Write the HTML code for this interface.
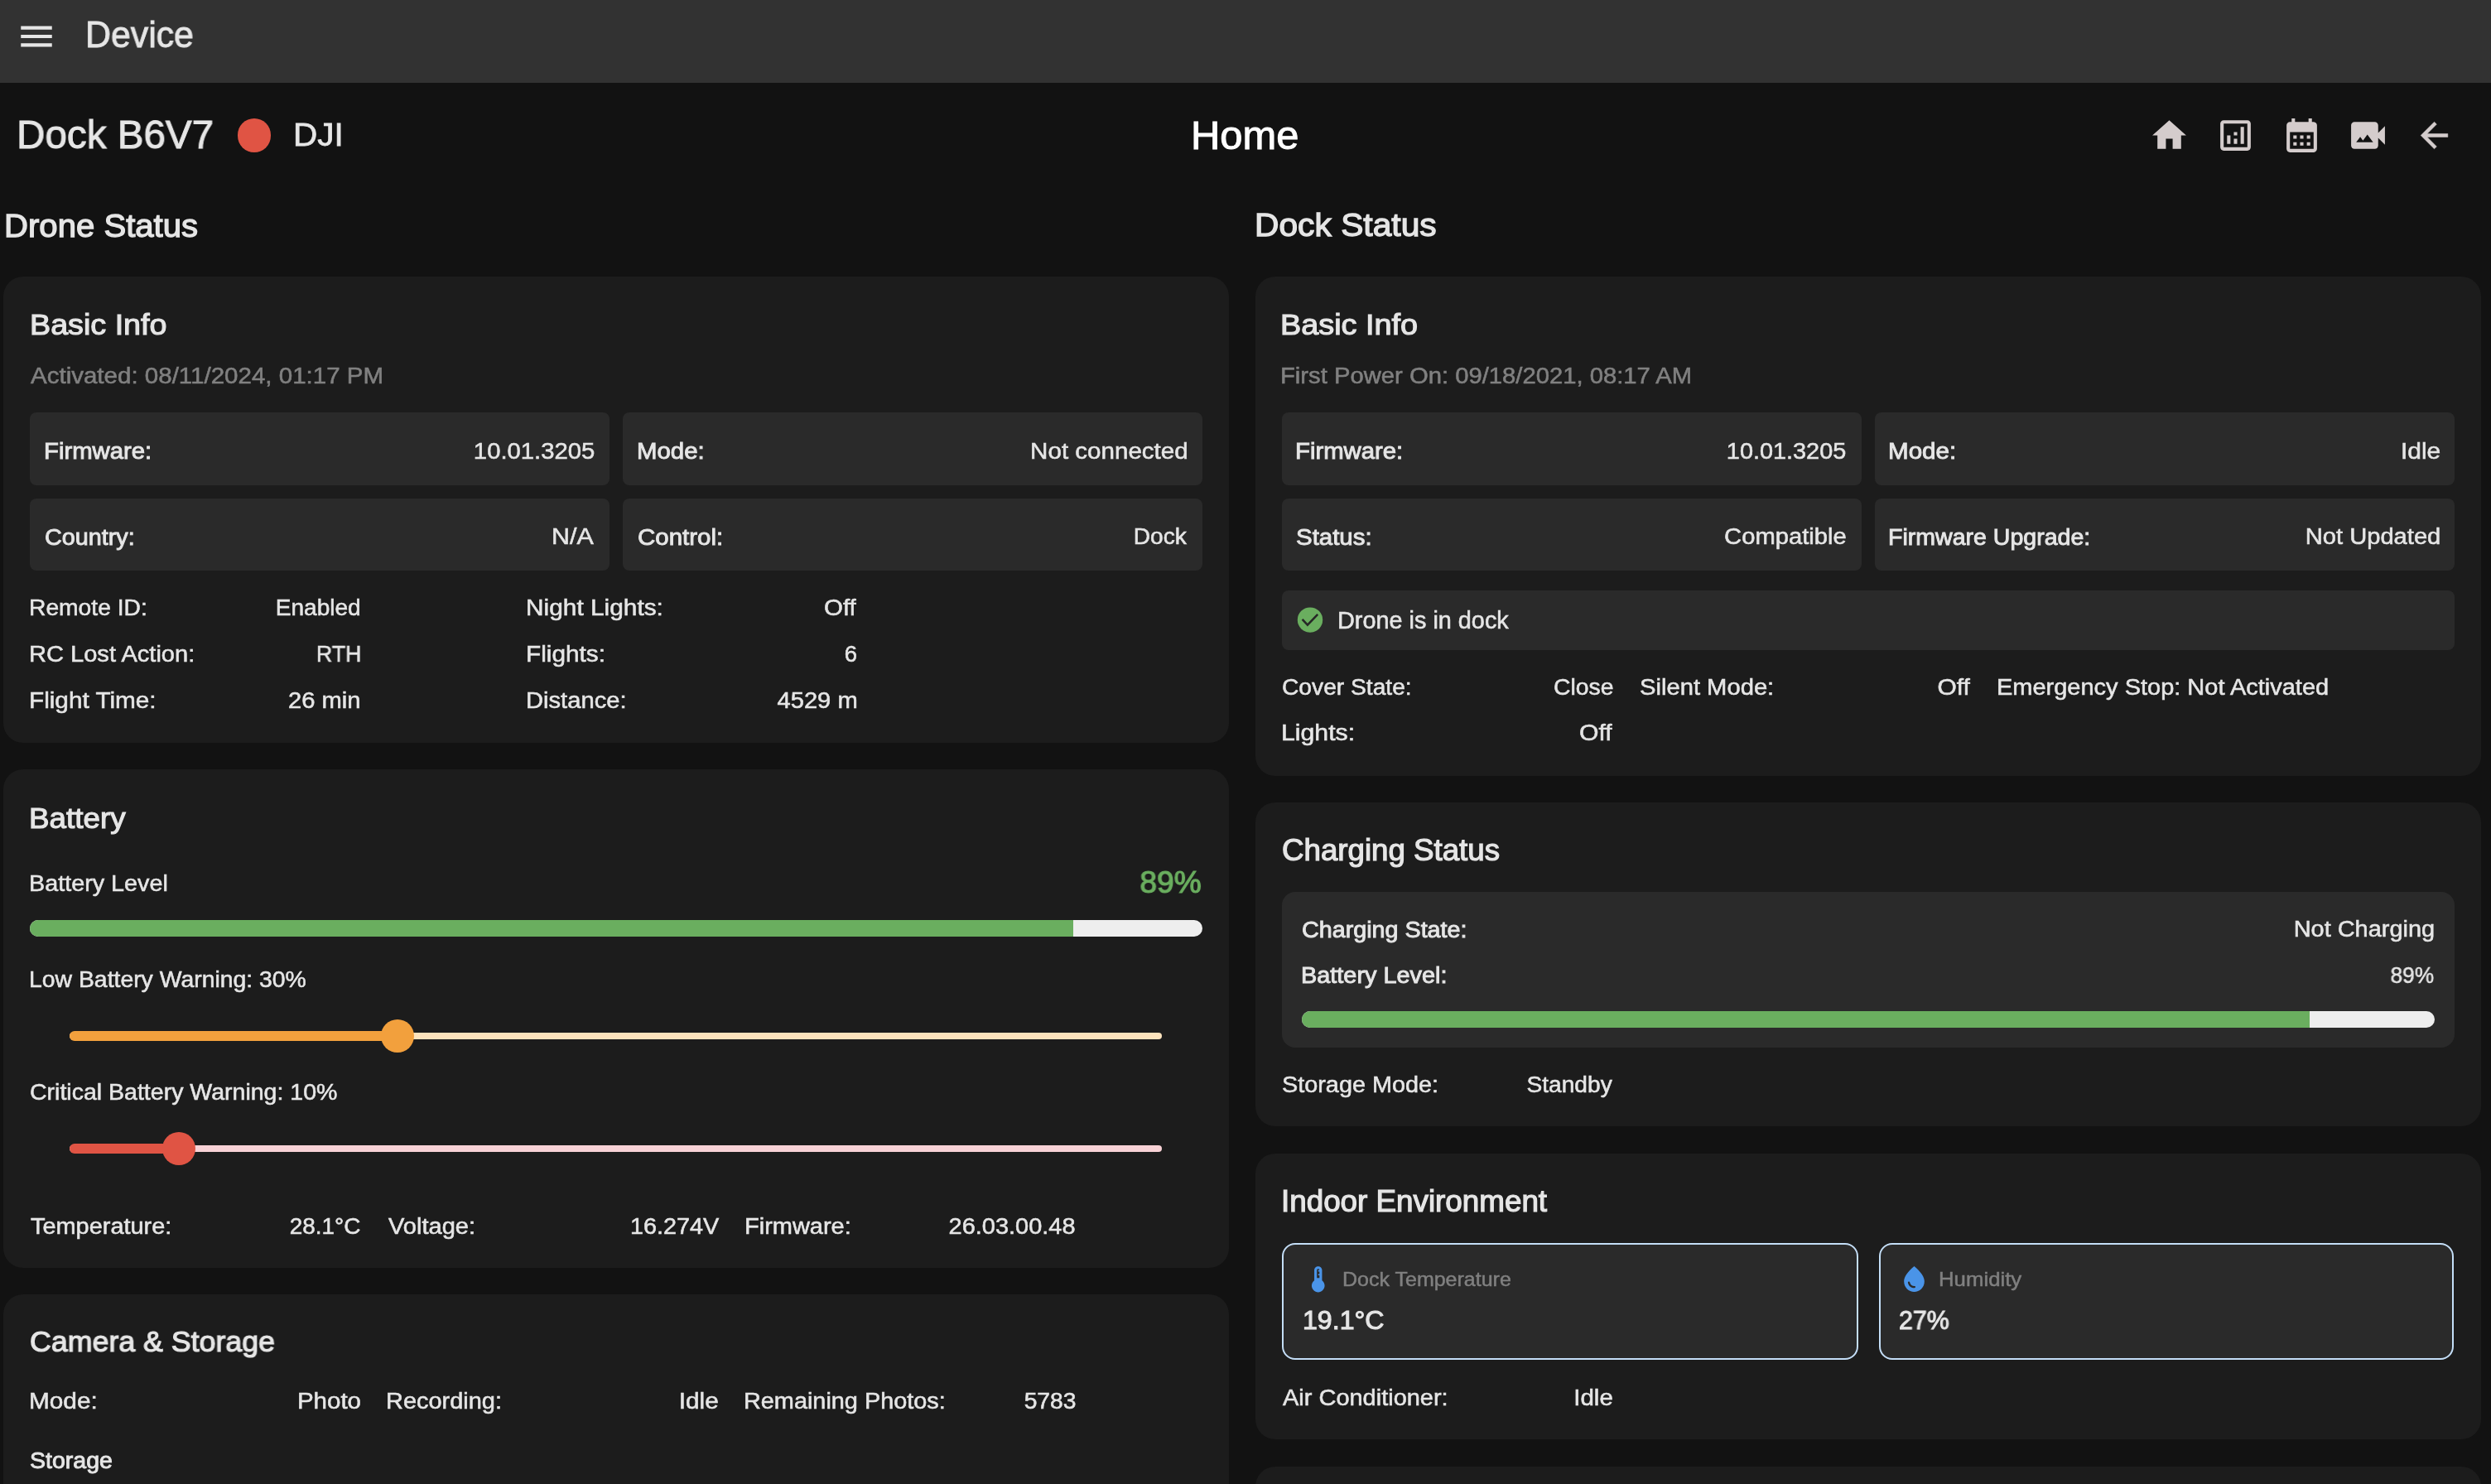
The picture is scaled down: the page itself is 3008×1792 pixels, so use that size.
<!DOCTYPE html>
<html><head><meta charset="utf-8"><title>Device</title>
<style>
html,body{margin:0;padding:0;}
body{width:3008px;height:1792px;overflow:hidden;background:#121212;position:relative;font-family:"Liberation Sans",sans-serif;}
.t{position:absolute;line-height:1;white-space:nowrap;-webkit-font-smoothing:antialiased;will-change:transform;}
</style></head><body>
<div style="position:absolute;left:0px;top:0px;width:3008px;height:100px;background:#323232;border-radius:0px;"></div><div style="position:absolute;left:4px;top:334px;width:1480px;height:563px;background:#1c1c1c;border-radius:24px;"></div><div style="position:absolute;left:4px;top:929px;width:1480px;height:602px;background:#1c1c1c;border-radius:24px;"></div><div style="position:absolute;left:4px;top:1563px;width:1480px;height:287px;background:#1c1c1c;border-radius:24px;"></div><div style="position:absolute;left:1516px;top:334px;width:1480px;height:603px;background:#1c1c1c;border-radius:24px;"></div><div style="position:absolute;left:1516px;top:969px;width:1480px;height:391px;background:#1c1c1c;border-radius:24px;"></div><div style="position:absolute;left:1516px;top:1393px;width:1480px;height:345px;background:#1c1c1c;border-radius:24px;"></div><div style="position:absolute;left:1516px;top:1771px;width:1480px;height:79px;background:#1c1c1c;border-radius:24px;"></div><div style="position:absolute;left:36px;top:498px;width:700px;height:88px;background:#2a2a2a;border-radius:8px;"></div><div style="position:absolute;left:36px;top:602px;width:700px;height:87px;background:#2a2a2a;border-radius:8px;"></div><div style="position:absolute;left:752px;top:498px;width:700px;height:88px;background:#2a2a2a;border-radius:8px;"></div><div style="position:absolute;left:752px;top:602px;width:700px;height:87px;background:#2a2a2a;border-radius:8px;"></div><div style="position:absolute;left:1548px;top:498px;width:700px;height:88px;background:#2a2a2a;border-radius:8px;"></div><div style="position:absolute;left:1548px;top:602px;width:700px;height:87px;background:#2a2a2a;border-radius:8px;"></div><div style="position:absolute;left:2264px;top:498px;width:700px;height:88px;background:#2a2a2a;border-radius:8px;"></div><div style="position:absolute;left:2264px;top:602px;width:700px;height:87px;background:#2a2a2a;border-radius:8px;"></div><div style="position:absolute;left:1548px;top:713px;width:1416px;height:72px;background:#2a2a2a;border-radius:8px;"></div><div style="position:absolute;left:36px;top:1111px;width:1416px;height:20px;background:#eeeeee;border-radius:10px;overflow:hidden;"></div><div style="position:absolute;left:36px;top:1111px;width:1260px;height:20px;background:#6aae5f;border-radius:0px;border-radius:10px 0 0 10px;"></div><div style="position:absolute;left:84px;top:1246.7px;width:1319.4px;height:8.400000000000091px;background:#fde3bd;border-radius:4px;"></div><div style="position:absolute;left:84px;top:1244.9px;width:395.8px;height:12.0px;background:#f2a03d;border-radius:6px;"></div><div style="position:absolute;left:460.0px;top:1231.1000000000001px;width:39.60000000000002px;height:39.59999999999991px;background:#f2a03d;border-radius:20px;"></div><div style="position:absolute;left:84px;top:1382.6px;width:1319.4px;height:8.400000000000091px;background:#f8d2d6;border-radius:4px;"></div><div style="position:absolute;left:84px;top:1380.8px;width:132.2px;height:12.0px;background:#e05444;border-radius:6px;"></div><div style="position:absolute;left:196.39999999999998px;top:1367.0px;width:39.60000000000002px;height:39.59999999999991px;background:#e05444;border-radius:20px;"></div><div style="position:absolute;left:1548px;top:1077px;width:1416px;height:188px;background:#2a2a2a;border-radius:16px;"></div><div style="position:absolute;left:1572.3px;top:1221.4px;width:1367.7px;height:19.199999999999818px;background:#eeeeee;border-radius:10px;"></div><div style="position:absolute;left:1572.3px;top:1221.4px;width:1217.1000000000001px;height:19.199999999999818px;background:#6aae5f;border-radius:0px;border-radius:10px 0 0 10px;"></div><div style="position:absolute;left:1548px;top:1500.8px;width:695.5px;height:141.5px;background:#2a2a2a;border-radius:16px;box-sizing:border-box;border:2.4px solid #c4def7;"></div><div style="position:absolute;left:2268.8px;top:1500.8px;width:694.6999999999998px;height:141.5px;background:#2a2a2a;border-radius:16px;box-sizing:border-box;border:2.4px solid #c4def7;"></div><div style="position:absolute;left:286.8px;top:143px;width:40.39999999999998px;height:41px;background:#e05444;border-radius:21px;"></div>
<svg style="position:absolute;left:2595.4px;top:138.7px" width="49" height="49" viewBox="0 0 24 24"><path fill="#d4cccc" d="M10 20v-6h4v6h5v-8h3L12 3 2 12h3v8z"/></svg><svg style="position:absolute;left:2675.4px;top:138.7px" width="49" height="49" viewBox="0 0 24 24"><path fill="#d4cccc" d="M19 3H5c-1.1 0-2 .9-2 2v14c0 1.1.9 2 2 2h14c1.1 0 2-.9 2-2V5c0-1.1-.9-2-2-2zm0 16H5V5h14v14zM7 12h2v5H7zm8-5h2v10h-2zm-4 7h2v3h-2zm0-4h2v2h-2z"/></svg><svg style="position:absolute;left:2755.4px;top:138.7px" width="49" height="49" viewBox="0 0 24 24"><path fill="#d4cccc" d="M19 4h-1V2h-2v2H8V2H6v2H5c-1.11 0-1.99.9-1.99 2L3 20c0 1.1.89 2 2 2h14c1.1 0 2-.9 2-2V6c0-1.1-.9-2-2-2zm0 16H5V10h14v10zM9 14H7v-2h2v2zm4 0h-2v-2h2v2zm4 0h-2v-2h2v2zm-8 4H7v-2h2v2zm4 0h-2v-2h2v2zm4 0h-2v-2h2v2z"/></svg><svg style="position:absolute;left:2835.4px;top:138.7px" width="49" height="49" viewBox="0 0 24 24"><path fill="#d4cccc" d="M18 10.48V6c0-1.1-.9-2-2-2H4c-1.1 0-2 .9-2 2v12c0 1.1.9 2 2 2h12c1.1 0 2-.9 2-2v-4.48l4 3.98v-11l-4 3.98zM5 16l2.38-3.17L9 15l2.62-3.5L15 16H5z"/></svg><svg style="position:absolute;left:2915.4px;top:138.7px" width="49" height="49" viewBox="0 0 24 24"><path fill="#d4cccc" stroke="#d4cccc" stroke-width="0.25" d="M20 11H7.83l5.59-5.59L12 4l-8 8 8 8 1.41-1.41L7.83 13H20v-2z"/></svg><svg style="position:absolute;left:19px;top:18.5px" width="50" height="50" viewBox="0 0 24 24"><path fill="#e6e6e6" d="M3 18h18v-2H3v2zm0-5h18v-2H3v2zm0-7v2h18V6H3z"/></svg><svg style="position:absolute;left:1560px;top:726px" width="44" height="44" viewBox="1560 726 44 44"><circle cx="1582" cy="748.6" r="15.2" fill="#6aae5f"/><polyline points="1572.6,747.9 1578.9,754.6 1591.2,741.8" fill="none" stroke="#262626" stroke-width="2.5"/></svg><svg style="position:absolute;left:1573.0px;top:1526.0px" width="37.5" height="37.5" viewBox="0 0 24 24"><path fill="#4a94e8" d="M15 13V5c0-1.66-1.34-3-3-3S9 3.34 9 5v8c-1.21.91-2 2.37-2 4 0 2.76 2.24 5 5 5s5-2.24 5-5c0-1.63-.79-3.09-2-4zm-4-8c0-.55.45-1 1-1s1 .45 1 1h-1v1h1v2h-1v1h1v2h-2V5z"/></svg><svg style="position:absolute;left:2293.4px;top:1526.1px" width="37" height="37" viewBox="0 0 24 24"><path fill="#4a94e8" d="M12 2c-5.33 4.55-8 8.48-8 11.8 0 4.98 3.8 8.2 8 8.2s8-3.22 8-8.2c0-3.32-2.67-7.25-8-11.8zM7.83 14c.37 0 .67.26.74.62.41 2.22 2.28 2.98 3.64 2.87.43-.02.79.32.79.75 0 .4-.32.73-.72.75-2.13.13-4.62-1.09-5.19-4.12-.08-.45.28-.87.74-.87z"/></svg>
<div class="t" id="t0" style="top:20.00px;font-size:44.65px;color:#e6e6e6;-webkit-text-stroke:0.89px #e6e6e6;left:103.00px;transform-origin:0 0;transform:scaleX(0.9596);">Device</div>
<div class="t" id="t1" style="top:138.45px;font-size:48.31px;color:#e6e6e6;-webkit-text-stroke:0.97px #e6e6e6;left:20.00px;transform-origin:0 0;transform:scaleX(0.9853);">Dock B6V7</div>
<div class="t" id="t2" style="top:143.36px;font-size:39.58px;color:#e6e6e6;-webkit-text-stroke:0.79px #e6e6e6;left:354.00px;transform-origin:0 0;transform:scaleX(1.0233);">DJI</div>
<div class="t" id="t3" style="top:138.67px;font-size:48.17px;color:#ffffff;-webkit-text-stroke:0.96px #ffffff;left:1438.00px;transform-origin:0 0;transform:scaleX(1.0150);">Home</div>
<div class="t" id="t4" style="top:252.52px;font-size:39.56px;color:#e6e6e6;-webkit-text-stroke:1.31px #e6e6e6;left:5.00px;transform-origin:0 0;transform:scaleX(1.0142);">Drone Status</div>
<div class="t" id="t5" style="top:252.02px;font-size:39.56px;color:#e6e6e6;-webkit-text-stroke:1.31px #e6e6e6;left:1515.00px;transform-origin:0 0;transform:scaleX(1.0304);">Dock Status</div>
<div class="t" id="t6" style="top:373.64px;font-size:35.96px;color:#e6e6e6;-webkit-text-stroke:1.19px #e6e6e6;left:36.00px;transform-origin:0 0;transform:scaleX(1.0483);">Basic Info</div>
<div class="t" id="t7" style="top:440.64px;font-size:27.04px;color:#808080;-webkit-text-stroke:0.54px #808080;left:37.00px;transform-origin:0 0;transform:scaleX(1.0919);">Activated: 08/11/2024, 01:17 PM</div>
<div class="t" id="t8" style="top:530.95px;font-size:27.52px;color:#e6e6e6;-webkit-text-stroke:0.91px #e6e6e6;left:53.00px;transform-origin:0 0;transform:scaleX(1.0643);">Firmware:</div>
<div class="t" id="t9" style="top:530.70px;font-size:28.03px;color:#e6e6e6;-webkit-text-stroke:0.56px #e6e6e6;right:2290.00px;transform-origin:100% 0;transform:scaleX(1.0437);">10.01.3205</div>
<div class="t" id="t10" style="top:530.95px;font-size:27.52px;color:#e6e6e6;-webkit-text-stroke:0.91px #e6e6e6;left:769.00px;transform-origin:0 0;transform:scaleX(1.0690);">Mode:</div>
<div class="t" id="t11" style="top:530.70px;font-size:28.03px;color:#e6e6e6;-webkit-text-stroke:0.56px #e6e6e6;right:1573.00px;transform-origin:100% 0;transform:scaleX(1.0547);">Not connected</div>
<div class="t" id="t12" style="top:634.55px;font-size:27.52px;color:#e6e6e6;-webkit-text-stroke:0.91px #e6e6e6;left:54.00px;transform-origin:0 0;transform:scaleX(1.0447);">Country:</div>
<div class="t" id="t13" style="top:634.30px;font-size:28.03px;color:#e6e6e6;-webkit-text-stroke:0.56px #e6e6e6;right:2291.00px;transform-origin:100% 0;transform:scaleX(1.0864);">N/A</div>
<div class="t" id="t14" style="top:634.55px;font-size:27.52px;color:#e6e6e6;-webkit-text-stroke:0.91px #e6e6e6;left:770.00px;transform-origin:0 0;transform:scaleX(1.0710);">Control:</div>
<div class="t" id="t15" style="top:634.30px;font-size:28.03px;color:#e6e6e6;-webkit-text-stroke:0.56px #e6e6e6;right:1575.00px;transform-origin:100% 0;transform:scaleX(1.0043);">Dock</div>
<div class="t" id="t16" style="top:719.52px;font-size:27.18px;color:#e6e6e6;-webkit-text-stroke:0.54px #e6e6e6;left:35.00px;transform-origin:0 0;transform:scaleX(1.0390);">Remote ID:</div>
<div class="t" id="t17" style="top:719.52px;font-size:27.18px;color:#e6e6e6;-webkit-text-stroke:0.54px #e6e6e6;right:2572.00px;transform-origin:100% 0;transform:scaleX(1.0335);">Enabled</div>
<div class="t" id="t18" style="top:775.52px;font-size:27.18px;color:#e6e6e6;-webkit-text-stroke:0.54px #e6e6e6;left:35.00px;transform-origin:0 0;transform:scaleX(1.0694);">RC Lost Action:</div>
<div class="t" id="t19" style="top:775.52px;font-size:27.18px;color:#e6e6e6;-webkit-text-stroke:0.54px #e6e6e6;right:2572.00px;transform-origin:100% 0;transform:scaleX(0.9838);">RTH</div>
<div class="t" id="t20" style="top:831.72px;font-size:27.18px;color:#e6e6e6;-webkit-text-stroke:0.54px #e6e6e6;left:35.00px;transform-origin:0 0;transform:scaleX(1.0940);">Flight Time:</div>
<div class="t" id="t21" style="top:831.72px;font-size:27.18px;color:#e6e6e6;-webkit-text-stroke:0.54px #e6e6e6;right:2572.00px;transform-origin:100% 0;transform:scaleX(1.0730);">26 min</div>
<div class="t" id="t22" style="top:719.52px;font-size:27.18px;color:#e6e6e6;-webkit-text-stroke:0.54px #e6e6e6;left:635.00px;transform-origin:0 0;transform:scaleX(1.0985);">Night Lights:</div>
<div class="t" id="t23" style="top:719.52px;font-size:27.18px;color:#e6e6e6;-webkit-text-stroke:0.54px #e6e6e6;right:1974.00px;transform-origin:100% 0;transform:scaleX(1.0849);">Off</div>
<div class="t" id="t24" style="top:775.52px;font-size:27.18px;color:#e6e6e6;-webkit-text-stroke:0.54px #e6e6e6;left:635.00px;transform-origin:0 0;transform:scaleX(1.0953);">Flights:</div>
<div class="t" id="t25" style="top:775.52px;font-size:27.18px;color:#e6e6e6;-webkit-text-stroke:0.54px #e6e6e6;right:1973.00px;transform-origin:100% 0;transform:scaleX(1.0095);">6</div>
<div class="t" id="t26" style="top:831.72px;font-size:27.18px;color:#e6e6e6;-webkit-text-stroke:0.54px #e6e6e6;left:635.00px;transform-origin:0 0;transform:scaleX(1.0730);">Distance:</div>
<div class="t" id="t27" style="top:831.72px;font-size:27.18px;color:#e6e6e6;-webkit-text-stroke:0.54px #e6e6e6;right:1972.00px;transform-origin:100% 0;transform:scaleX(1.0710);">4529 m</div>
<div class="t" id="t28" style="top:969.54px;font-size:35.27px;color:#e6e6e6;-webkit-text-stroke:1.16px #e6e6e6;left:35.00px;transform-origin:0 0;transform:scaleX(1.0432);">Battery</div>
<div class="t" id="t29" style="top:1052.72px;font-size:27.18px;color:#e6e6e6;-webkit-text-stroke:0.54px #e6e6e6;left:35.00px;transform-origin:0 0;transform:scaleX(1.0580);">Battery Level</div>
<div class="t" id="t30" style="top:1046.84px;font-size:37.34px;color:#6aae5f;-webkit-text-stroke:1.23px #6aae5f;right:1557.00px;transform-origin:100% 0;transform:scaleX(0.9948);">89%</div>
<div class="t" id="t31" style="top:1169.28px;font-size:27.46px;color:#e6e6e6;-webkit-text-stroke:0.55px #e6e6e6;left:35.00px;transform-origin:0 0;transform:scaleX(1.0334);">Low Battery Warning: 30%</div>
<div class="t" id="t32" style="top:1306.29px;font-size:26.76px;color:#e6e6e6;-webkit-text-stroke:0.54px #e6e6e6;left:36.00px;transform-origin:0 0;transform:scaleX(1.0660);">Critical Battery Warning: 10%</div>
<div class="t" id="t33" style="top:1466.62px;font-size:27.18px;color:#e6e6e6;-webkit-text-stroke:0.54px #e6e6e6;left:37.00px;transform-origin:0 0;transform:scaleX(1.0638);">Temperature:</div>
<div class="t" id="t34" style="top:1466.62px;font-size:27.18px;color:#e6e6e6;-webkit-text-stroke:0.54px #e6e6e6;right:2573.00px;transform-origin:100% 0;transform:scaleX(1.0277);">28.1°C</div>
<div class="t" id="t35" style="top:1466.62px;font-size:27.18px;color:#e6e6e6;-webkit-text-stroke:0.54px #e6e6e6;left:469.00px;transform-origin:0 0;transform:scaleX(1.0698);">Voltage:</div>
<div class="t" id="t36" style="top:1466.62px;font-size:27.18px;color:#e6e6e6;-webkit-text-stroke:0.54px #e6e6e6;right:2140.00px;transform-origin:100% 0;transform:scaleX(1.0593);">16.274V</div>
<div class="t" id="t37" style="top:1466.62px;font-size:27.18px;color:#e6e6e6;-webkit-text-stroke:0.54px #e6e6e6;left:899.00px;transform-origin:0 0;transform:scaleX(1.0663);">Firmware:</div>
<div class="t" id="t38" style="top:1466.62px;font-size:27.18px;color:#e6e6e6;-webkit-text-stroke:0.54px #e6e6e6;right:1709.00px;transform-origin:100% 0;transform:scaleX(1.0659);">26.03.00.48</div>
<div class="t" id="t39" style="top:1602.14px;font-size:35.96px;color:#e6e6e6;-webkit-text-stroke:1.19px #e6e6e6;left:36.00px;transform-origin:0 0;transform:scaleX(0.9941);">Camera &amp; Storage</div>
<div class="t" id="t40" style="top:1678.02px;font-size:27.18px;color:#e6e6e6;-webkit-text-stroke:0.54px #e6e6e6;left:35.00px;transform-origin:0 0;transform:scaleX(1.0953);">Mode:</div>
<div class="t" id="t41" style="top:1678.02px;font-size:27.18px;color:#e6e6e6;-webkit-text-stroke:0.54px #e6e6e6;right:2572.00px;transform-origin:100% 0;transform:scaleX(1.0857);">Photo</div>
<div class="t" id="t42" style="top:1678.02px;font-size:27.18px;color:#e6e6e6;-webkit-text-stroke:0.54px #e6e6e6;left:466.00px;transform-origin:0 0;transform:scaleX(1.0655);">Recording:</div>
<div class="t" id="t43" style="top:1678.02px;font-size:27.18px;color:#e6e6e6;-webkit-text-stroke:0.54px #e6e6e6;right:2140.00px;transform-origin:100% 0;transform:scaleX(1.0968);">Idle</div>
<div class="t" id="t44" style="top:1678.02px;font-size:27.18px;color:#e6e6e6;-webkit-text-stroke:0.54px #e6e6e6;left:898.00px;transform-origin:0 0;transform:scaleX(1.0615);">Remaining Photos:</div>
<div class="t" id="t45" style="top:1678.02px;font-size:27.18px;color:#e6e6e6;-webkit-text-stroke:0.54px #e6e6e6;right:1709.00px;transform-origin:100% 0;transform:scaleX(1.0387);">5783</div>
<div class="t" id="t46" style="top:1749.75px;font-size:27.52px;color:#e6e6e6;-webkit-text-stroke:0.91px #e6e6e6;left:36.00px;transform-origin:0 0;transform:scaleX(1.0366);">Storage</div>
<div class="t" id="t47" style="top:373.64px;font-size:35.96px;color:#e6e6e6;-webkit-text-stroke:1.19px #e6e6e6;left:1546.00px;transform-origin:0 0;transform:scaleX(1.0524);">Basic Info</div>
<div class="t" id="t48" style="top:440.64px;font-size:27.04px;color:#808080;-webkit-text-stroke:0.54px #808080;left:1546.00px;transform-origin:0 0;transform:scaleX(1.0814);">First Power On: 09/18/2021, 08:17 AM</div>
<div class="t" id="t49" style="top:530.95px;font-size:27.52px;color:#e6e6e6;-webkit-text-stroke:0.91px #e6e6e6;left:1564.00px;transform-origin:0 0;transform:scaleX(1.0643);">Firmware:</div>
<div class="t" id="t50" style="top:530.70px;font-size:28.03px;color:#e6e6e6;-webkit-text-stroke:0.56px #e6e6e6;right:779.00px;transform-origin:100% 0;transform:scaleX(1.0297);">10.01.3205</div>
<div class="t" id="t51" style="top:530.95px;font-size:27.52px;color:#e6e6e6;-webkit-text-stroke:0.91px #e6e6e6;left:2280.00px;transform-origin:0 0;transform:scaleX(1.0749);">Mode:</div>
<div class="t" id="t52" style="top:530.70px;font-size:28.03px;color:#e6e6e6;-webkit-text-stroke:0.56px #e6e6e6;right:61.00px;transform-origin:100% 0;transform:scaleX(1.0678);">Idle</div>
<div class="t" id="t53" style="top:634.55px;font-size:27.52px;color:#e6e6e6;-webkit-text-stroke:0.91px #e6e6e6;left:1565.00px;transform-origin:0 0;transform:scaleX(1.0696);">Status:</div>
<div class="t" id="t54" style="top:634.30px;font-size:28.03px;color:#e6e6e6;-webkit-text-stroke:0.56px #e6e6e6;right:778.00px;transform-origin:100% 0;transform:scaleX(1.0415);">Compatible</div>
<div class="t" id="t55" style="top:634.55px;font-size:27.52px;color:#e6e6e6;-webkit-text-stroke:0.91px #e6e6e6;left:2280.00px;transform-origin:0 0;transform:scaleX(1.0372);">Firmware Upgrade:</div>
<div class="t" id="t56" style="top:634.30px;font-size:28.03px;color:#e6e6e6;-webkit-text-stroke:0.56px #e6e6e6;right:61.00px;transform-origin:100% 0;transform:scaleX(1.0401);">Not Updated</div>
<div class="t" id="t57" style="top:734.81px;font-size:28.59px;color:#e6e6e6;-webkit-text-stroke:0.57px #e6e6e6;left:1615.00px;transform-origin:0 0;transform:scaleX(1.0090);">Drone is in dock</div>
<div class="t" id="t58" style="top:815.62px;font-size:27.18px;color:#e6e6e6;-webkit-text-stroke:0.54px #e6e6e6;left:1548.00px;transform-origin:0 0;transform:scaleX(1.0374);">Cover State:</div>
<div class="t" id="t59" style="top:815.62px;font-size:27.18px;color:#e6e6e6;-webkit-text-stroke:0.54px #e6e6e6;right:1060.00px;transform-origin:100% 0;transform:scaleX(1.0429);">Close</div>
<div class="t" id="t60" style="top:815.62px;font-size:27.18px;color:#e6e6e6;-webkit-text-stroke:0.54px #e6e6e6;left:1980.00px;transform-origin:0 0;transform:scaleX(1.0741);">Silent Mode:</div>
<div class="t" id="t61" style="top:815.62px;font-size:27.18px;color:#e6e6e6;-webkit-text-stroke:0.54px #e6e6e6;right:629.00px;transform-origin:100% 0;transform:scaleX(1.1007);">Off</div>
<div class="t" id="t62" style="top:815.62px;font-size:27.18px;color:#e6e6e6;-webkit-text-stroke:0.54px #e6e6e6;left:2411.00px;transform-origin:0 0;transform:scaleX(1.0666);">Emergency Stop: Not Activated</div>
<div class="t" id="t63" style="top:871.32px;font-size:27.18px;color:#e6e6e6;-webkit-text-stroke:0.54px #e6e6e6;left:1547.00px;transform-origin:0 0;transform:scaleX(1.1121);">Lights:</div>
<div class="t" id="t64" style="top:871.32px;font-size:27.18px;color:#e6e6e6;-webkit-text-stroke:0.54px #e6e6e6;right:1061.00px;transform-origin:100% 0;transform:scaleX(1.1098);">Off</div>
<div class="t" id="t65" style="top:1009.08px;font-size:36.38px;color:#e6e6e6;-webkit-text-stroke:1.20px #e6e6e6;left:1548.00px;transform-origin:0 0;transform:scaleX(1.0085);">Charging Status</div>
<div class="t" id="t66" style="top:1108.55px;font-size:27.52px;color:#e6e6e6;-webkit-text-stroke:0.91px #e6e6e6;left:1572.00px;transform-origin:0 0;transform:scaleX(1.0435);">Charging State:</div>
<div class="t" id="t67" style="top:1108.30px;font-size:28.03px;color:#e6e6e6;-webkit-text-stroke:0.56px #e6e6e6;right:68.00px;transform-origin:100% 0;transform:scaleX(1.0320);">Not Charging</div>
<div class="t" id="t68" style="top:1163.75px;font-size:27.52px;color:#e6e6e6;-webkit-text-stroke:0.91px #e6e6e6;left:1571.00px;transform-origin:0 0;transform:scaleX(1.0491);">Battery Level:</div>
<div class="t" id="t69" style="top:1163.50px;font-size:28.03px;color:#e6e6e6;-webkit-text-stroke:0.56px #e6e6e6;right:69.00px;transform-origin:100% 0;transform:scaleX(0.9372);">89%</div>
<div class="t" id="t70" style="top:1295.92px;font-size:27.18px;color:#e6e6e6;-webkit-text-stroke:0.54px #e6e6e6;left:1548.00px;transform-origin:0 0;transform:scaleX(1.0606);">Storage Mode:</div>
<div class="t" id="t71" style="top:1295.92px;font-size:27.18px;color:#e6e6e6;-webkit-text-stroke:0.54px #e6e6e6;right:1061.00px;transform-origin:100% 0;transform:scaleX(1.0350);">Standby</div>
<div class="t" id="t72" style="top:1432.58px;font-size:36.38px;color:#e6e6e6;-webkit-text-stroke:1.20px #e6e6e6;left:1547.00px;transform-origin:0 0;transform:scaleX(1.0114);">Indoor Environment</div>
<div class="t" id="t73" style="top:1534.17px;font-size:23.52px;color:#808080;-webkit-text-stroke:0.47px #808080;left:1621.00px;transform-origin:0 0;transform:scaleX(1.0634);">Dock Temperature</div>
<div class="t" id="t74" style="top:1578.83px;font-size:31.12px;color:#e6e6e6;-webkit-text-stroke:1.03px #e6e6e6;left:1573.00px;transform-origin:0 0;transform:scaleX(1.0326);">19.1°C</div>
<div class="t" id="t75" style="top:1534.17px;font-size:23.52px;color:#808080;-webkit-text-stroke:0.47px #808080;left:2341.00px;transform-origin:0 0;transform:scaleX(1.0958);">Humidity</div>
<div class="t" id="t76" style="top:1578.83px;font-size:31.12px;color:#e6e6e6;-webkit-text-stroke:1.03px #e6e6e6;left:2293.00px;transform-origin:0 0;transform:scaleX(0.9784);">27%</div>
<div class="t" id="t77" style="top:1673.92px;font-size:27.18px;color:#e6e6e6;-webkit-text-stroke:0.54px #e6e6e6;left:1549.00px;transform-origin:0 0;transform:scaleX(1.0662);">Air Conditioner:</div>
<div class="t" id="t78" style="top:1673.92px;font-size:27.18px;color:#e6e6e6;-webkit-text-stroke:0.54px #e6e6e6;right:1060.00px;transform-origin:100% 0;transform:scaleX(1.0846);">Idle</div>
<script>(function(){var w=window.innerWidth;if(w&&Math.abs(w-3008)>1){document.body.style.zoom=(w/3008);}})();</script>
</body></html>
